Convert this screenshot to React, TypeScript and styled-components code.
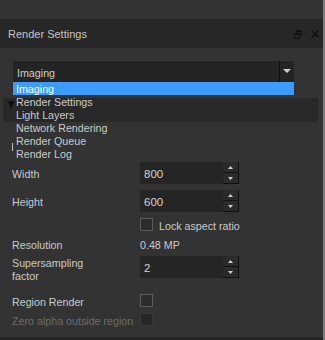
import React from "react";
import styled, { createGlobalStyle } from "styled-components";

const GlobalStyle = createGlobalStyle`
  body {
    margin: 0;
    background: #333333;
  }
`;

const listItems = [
  "Imaging",
  "Render Settings",
  "Light Layers",
  "Network Rendering",
  "Render Queue",
  "Render Log",
];

const App: React.FC = () => {
  return (
    <Panel>
      <GlobalStyle />
      <TopGap />
      <TitleBar>
        <Title>Render Settings</Title>
        <TitleIcons>
          <svg width="8" height="9" viewBox="0 0 8 9">
            <rect x="2.5" y="0.5" width="5" height="5" fill="none" stroke="#111" />
            <rect x="0.5" y="3.5" width="5" height="5" fill="#272727" stroke="#111" />
            <line x1="2.5" y1="1.5" x2="7.5" y2="1.5" stroke="#111" />
            <line x1="0.5" y1="4.5" x2="5.5" y2="4.5" stroke="#111" />
          </svg>
          <svg width="8" height="8" viewBox="0 0 8 8">
            <path d="M0.5 0.5 L7.5 7.5 M7.5 0.5 L0.5 7.5" stroke="#111" strokeWidth="1.5" />
          </svg>
        </TitleIcons>
      </TitleBar>
      <Body>
        <Combo>
          <ComboText>Imaging</ComboText>
          <ComboButton>
            <svg width="8" height="5" viewBox="0 0 8 5">
              <path d="M0 0 L8 0 L4 4 Z" fill="#cfcfcf" />
            </svg>
          </ComboButton>
          <DropList>
            {listItems.map((item, i) => (
              <DropItem key={item} $active={i === 0}>
                {item}
              </DropItem>
            ))}
          </DropList>
        </Combo>
        <SectionBar>
          <svg width="6" height="8" viewBox="0 0 6 8">
            <path d="M0 0 L6 0 L3 8 Z" fill="#0d0d0d" />
          </svg>
        </SectionBar>
        <Caret />
        <Form>
          <Row $top={11} $h={22}>
            <Label>Width</Label>
            <SpinBox value="800" />
          </Row>
          <Row $top={6} $h={22}>
            <Label>Height</Label>
            <SpinBox value="600" />
          </Row>
          <Row $top={6} $h={13}>
            <Label />
            <Check />
            <CheckText>Lock aspect ratio</CheckText>
          </Row>
          <Row $top={7} $h={12}>
            <Label>Resolution</Label>
            <Value>0.48 MP</Value>
          </Row>
          <Row $top={6} $h={26} $start>
            <Label $multi>
              Supersampling
              <br />
              factor
            </Label>
            <SpinBox value="2" />
          </Row>
          <Row $top={12} $h={13}>
            <Label>Region Render</Label>
            <Check />
          </Row>
          <Row $top={6} $h={13}>
            <Label $disabled>Zero alpha outside region</Label>
            <Check $disabled />
          </Row>
        </Form>
      </Body>
      <BottomEdge />
    </Panel>
  );
};

const SpinBox: React.FC<{ value: string }> = ({ value }) => (
  <Spin>
    <SpinValue>{value}</SpinValue>
    <SpinButtons>
      <SpinButton>
        <svg width="5" height="3" viewBox="0 0 5 3">
          <path d="M0 3 L5 3 L2.5 0 Z" fill="#d0d0d0" />
        </svg>
      </SpinButton>
      <SpinButton>
        <svg width="5" height="3" viewBox="0 0 5 3">
          <path d="M0 0 L5 0 L2.5 3 Z" fill="#d0d0d0" />
        </svg>
      </SpinButton>
    </SpinButtons>
  </Spin>
);

const Panel = styled.div`
  position: relative;
  width: 325px;
  height: 340px;
  overflow: hidden;
  box-sizing: border-box;
  background: #333333;
  border-right: 2px solid #7c7c7c;
  font-family: "Liberation Sans", Arial, sans-serif;
  font-size: 10.7px;
  color: #c9c9c9;
  display: flex;
  flex-direction: column;
`;

const TopGap = styled.div`
  height: 19px;
  flex: none;
`;

const TitleBar = styled.div`
  height: 29px;
  flex: none;
  background: #272727;
  display: flex;
  align-items: center;
  justify-content: space-between;
  padding: 0 4px 0 8px;
`;

const Title = styled.span`
  color: #c4c4c4;
  font-size: 11px;
`;

const TitleIcons = styled.div`
  display: flex;
  align-items: center;
  gap: 9px;
  padding-top: 1px;
`;

const Body = styled.div`
  flex: 1;
  display: flex;
  flex-direction: column;
  padding-top: 13px;
`;

const Combo = styled.div`
  position: relative;
  margin-left: 13px;
  width: 281px;
  height: 21px;
  background: #242424;
  display: flex;
  align-items: center;
`;

const ComboText = styled.span`
  flex: 1;
  padding: 2px 0 0 4px;
  color: #cccccc;
`;

const ComboButton = styled.div`
  width: 14px;
  height: 100%;
  border-left: 1px solid #0f0f0f;
  display: flex;
  align-items: center;
  justify-content: center;
`;

const DropList = styled.div`
  position: absolute;
  top: 21px;
  left: 0;
  right: 0;
  display: flex;
  flex-direction: column;
  z-index: 2;
`;

const DropItem = styled.div<{ $active?: boolean }>`
  height: 13px;
  line-height: 15px;
  padding-left: 3px;
  background: ${(p) => (p.$active ? "#3d9bff" : "transparent")};
  color: ${(p) => (p.$active ? "#ffffff" : "#cacaca")};
`;

const SectionBar = styled.div`
  margin: 16px 5px 0 3px;
  height: 24px;
  background: #282828;
  display: flex;
  align-items: flex-start;
  padding: 3px 0 0 5px;
  box-sizing: border-box;
`;

const Caret = styled.div`
  margin: 21px 0 0 12px;
  width: 1px;
  height: 8px;
  background: #bdbdbd;
`;

const Form = styled.div`
  display: flex;
  flex-direction: column;
  padding-left: 12px;
`;

const Row = styled.div<{ $top: number; $h: number; $start?: boolean }>`
  display: flex;
  align-items: ${(p) => (p.$start ? "flex-start" : "center")};
  margin-top: ${(p) => p.$top}px;
  height: ${(p) => p.$h}px;
`;

const Label = styled.div<{ $disabled?: boolean; $multi?: boolean }>`
  width: 128px;
  flex: none;
  white-space: nowrap;
  padding-top: ${(p) => (p.$multi ? "1px" : "2px")};
  line-height: ${(p) => (p.$multi ? "13px" : "normal")};
  color: ${(p) => (p.$disabled ? "#6b6b6b" : "#c9c9c9")};
`;

const Value = styled.span`
  padding-top: 2px;
  color: #c9c9c9;
`;

const Spin = styled.div`
  width: 99px;
  height: 22px;
  background: #252525;
  display: flex;
  align-items: center;
`;

const SpinValue = styled.span`
  flex: 1;
  padding: 2px 0 0 4px;
  color: #d2d2d2;
  font-size: 11.5px;
`;

const SpinButtons = styled.div`
  width: 16px;
  height: 100%;
  display: flex;
  flex-direction: column;
`;

const SpinButton = styled.div`
  flex: 1;
  background: #2b2b2b;
  border-right: 1px solid #111;
  border-bottom: 1px solid #111;
  display: flex;
  align-items: center;
  justify-content: center;
`;

const Check = styled.div<{ $disabled?: boolean }>`
  width: 11px;
  height: 11px;
  flex: none;
  border: 1px solid ${(p) => (p.$disabled ? "#3a3a3a" : "#5c5c5c")};
  background: ${(p) => (p.$disabled ? "#272727" : "#2c2c2c")};
`;

const CheckText = styled.span`
  margin-left: 6px;
  padding-top: 2px;
  color: #c9c9c9;
`;

const BottomEdge = styled.div`
  height: 3px;
  flex: none;
  background: #262626;
`;

export default App;
